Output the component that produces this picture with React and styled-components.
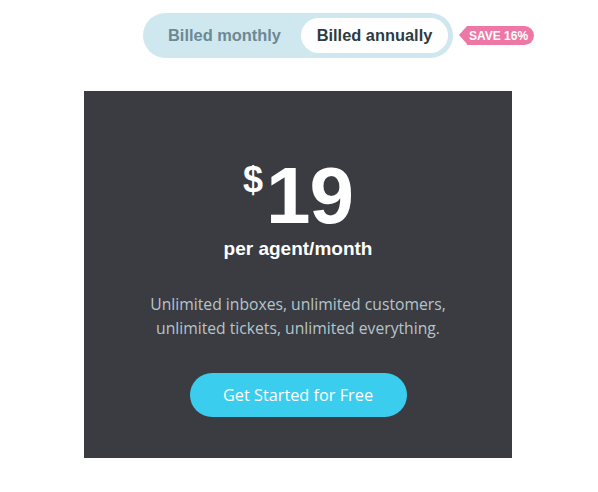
import styled, { createGlobalStyle } from "styled-components";

const GlobalStyle = createGlobalStyle`
  body {
    margin: 0;
    background: #fff;
    font-family: "Liberation Sans", Arial, sans-serif;
  }
`;

const Page = styled.div`
  display: flex;
  flex-direction: column;
  align-items: center;
  padding: 13px 2px 0 0;
`;

const ToggleWrap = styled.div`
  position: relative;
`;

const Toggle = styled.div`
  display: flex;
  padding: 5px;
  border-radius: 23px;
  background: #cfe8ef;
`;

const Option = styled.button`
  height: 35px;
  width: ${(p) => p.$w}px;
  padding: 0;
  border: none;
  border-radius: 18px;
  background: ${(p) => (p.$active ? "#fff" : "transparent")};
  color: ${(p) => (p.$active ? "#2f3b42" : "#6c8994")};
  font-family: "Liberation Sans", Arial, sans-serif;
  font-weight: 700;
  font-size: 16.4px;
  cursor: pointer;
`;

const Badge = styled.span`
  position: absolute;
  left: calc(100% + 14px);
  top: 13px;
  height: 19px;
  padding: 0 6px 0 2px;
  display: flex;
  align-items: center;
  border-radius: 0 10px 10px 0;
  background: #ee78a5;
  color: #fff;
  font-size: 12px;
  font-weight: 700;
  white-space: nowrap;

  &::before {
    content: "";
    position: absolute;
    left: -8px;
    top: 0;
    border-style: solid;
    border-width: 9.5px 8px 9.5px 0;
    border-color: transparent #ee78a5 transparent transparent;
  }
`;

const Card = styled.div`
  width: 428px;
  height: 367px;
  margin-top: 33px;
  background: #3a3c41;
  display: flex;
  flex-direction: column;
  align-items: center;
  box-sizing: border-box;
  padding-top: 65px;
`;

const Price = styled.div`
  display: flex;
  align-items: flex-start;
  color: #fff;
  font-weight: 700;
  line-height: 1;
`;

const Currency = styled.span`
  font-size: 36px;
  margin-top: 6px;
  margin-right: 3px;
`;

const Amount = styled.span`
  font-size: 80px;
  letter-spacing: -1px;
`;

const Period = styled.div`
  margin-top: 2px;
  color: #fff;
  font-weight: 700;
  font-size: 19px;
`;

const Description = styled.p`
  margin: 32px 0 0;
  text-align: center;
  color: #b7c4cc;
  font-family: "Open Sans", sans-serif;
  font-size: 15.7px;
  line-height: 24px;
`;

const CTA = styled.button`
  margin-top: 33px;
  width: 217px;
  height: 44px;
  border: none;
  border-radius: 22px;
  background: #3bcdee;
  color: #fff;
  font-family: "Open Sans", sans-serif;
  font-size: 16.3px;
  cursor: pointer;
`;

export default function App() {
  return (
    <>
      <GlobalStyle />
      <Page>
        <ToggleWrap>
          <Toggle>
            <Option $w={153}>Billed monthly</Option>
            <Option $w={147} $active>
              Billed annually
            </Option>
          </Toggle>
          <Badge>SAVE 16%</Badge>
        </ToggleWrap>
        <Card>
          <Price>
            <Currency>$</Currency>
            <Amount>19</Amount>
          </Price>
          <Period>per agent/month</Period>
          <Description>
            Unlimited inboxes, unlimited customers,
            <br />
            unlimited tickets, unlimited everything.
          </Description>
          <CTA>Get Started for Free</CTA>
        </Card>
      </Page>
    </>
  );
}
